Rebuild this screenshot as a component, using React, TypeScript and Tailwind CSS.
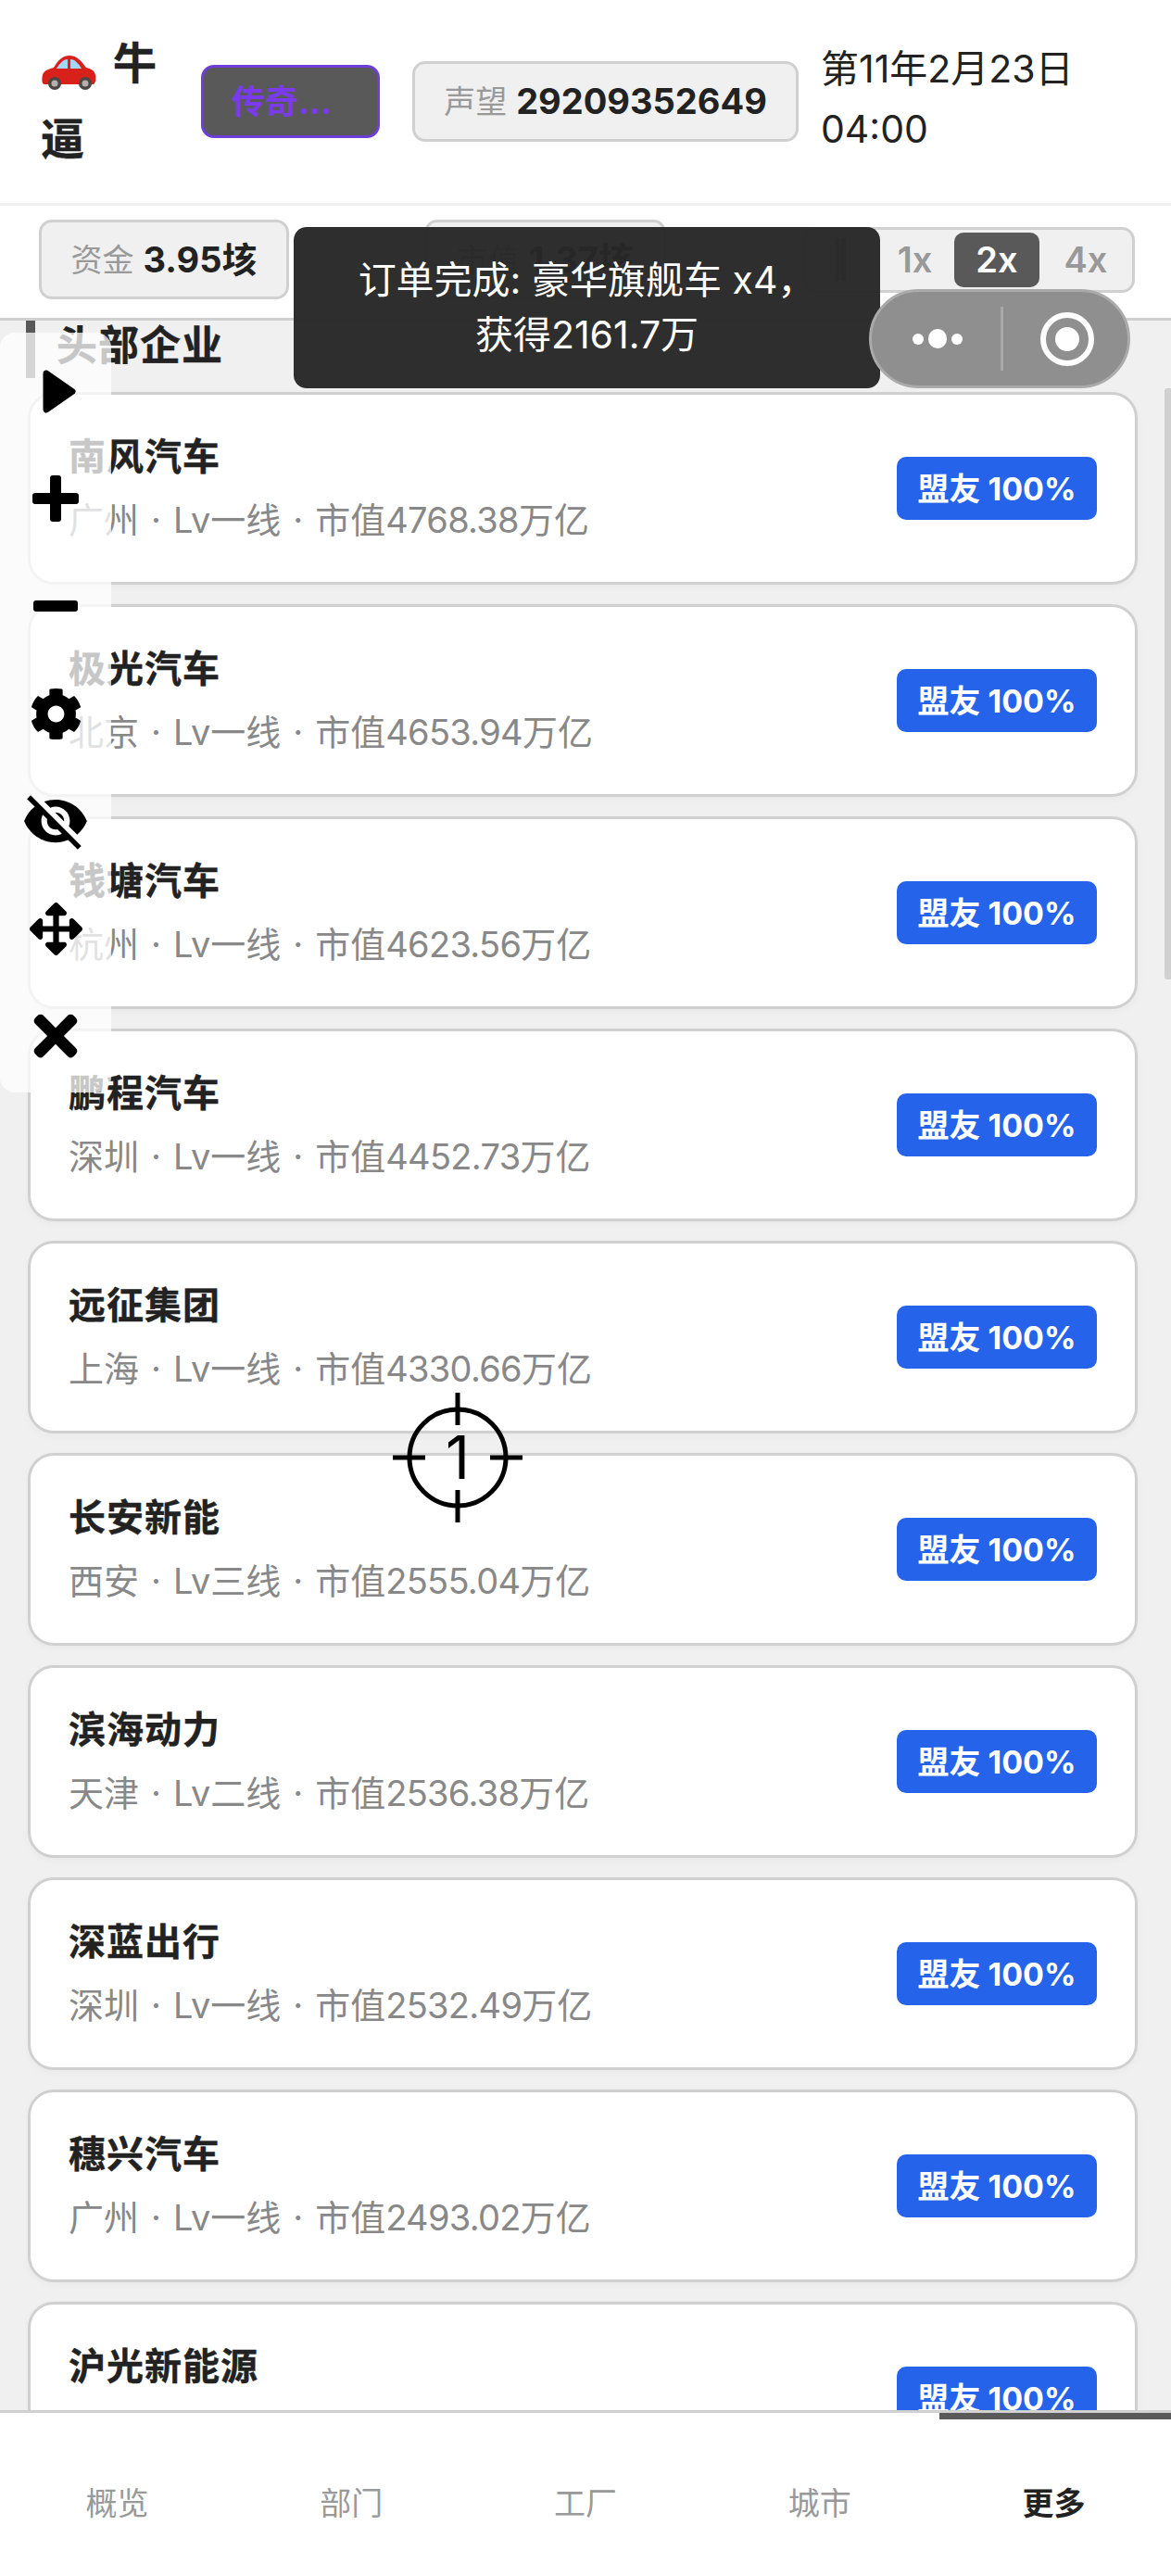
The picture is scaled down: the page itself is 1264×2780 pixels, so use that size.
import React from 'react';
import { FaCog, FaArrowsAlt, FaTimes } from 'react-icons/fa';
import { MdVisibilityOff } from 'react-icons/md';

const companies = [
  { name: '南风汽车', city: '广州', level: '一线', value: '4768.38' },
  { name: '极光汽车', city: '北京', level: '一线', value: '4653.94' },
  { name: '钱塘汽车', city: '杭州', level: '一线', value: '4623.56' },
  { name: '鹏程汽车', city: '深圳', level: '一线', value: '4452.73' },
  { name: '远征集团', city: '上海', level: '一线', value: '4330.66' },
  { name: '长安新能', city: '西安', level: '三线', value: '2555.04' },
  { name: '滨海动力', city: '天津', level: '二线', value: '2536.38' },
  { name: '深蓝出行', city: '深圳', level: '一线', value: '2532.49' },
  { name: '穗兴汽车', city: '广州', level: '一线', value: '2493.02' },
  { name: '沪光新能源', city: '上海', level: '一线', value: '2410.17' },
];

const tabs = ['概览', '部门', '工厂', '城市', '更多'];

const CarIcon = () => (
  <svg width="60" height="38" viewBox="0 0 60 38" className="inline-block align-[-12px]">
    <path d="M2 22c1-5 8-7 12-8 4-7 9-13 17-13s13 6 18 13c5 1 9 3 10 8 1 4 0 9-2 10H4C1 32 1 26 2 22z" fill="#d9211c" />
    <path d="M17 15c3-5 7-10 12-10v10H17zM32 5c5 0 9 5 12 10H32V5z" fill="#a5d8f3" />
    <circle cx="15" cy="31" r="7" fill="#4b4544" />
    <circle cx="15" cy="31" r="3.5" fill="#b5b0ae" />
    <circle cx="48" cy="31" r="7" fill="#4b4544" />
    <circle cx="48" cy="31" r="3.5" fill="#b5b0ae" />
  </svg>
);

const PlayIcon = () => (
  <svg width="36" height="47" viewBox="0 0 36 47" className="ml-[8px]">
    <path d="M4 4L32 23.5L4 43Z" fill="#000000" stroke="#000000" strokeWidth="7" strokeLinejoin="round" />
  </svg>
);

const PlusIcon = () => (
  <svg width="50" height="50" viewBox="0 0 50 50">
    <rect x="0" y="19" width="50" height="12" rx="3" fill="#000000" />
    <rect x="19" y="0" width="12" height="50" rx="3" fill="#000000" />
  </svg>
);

const MinusIcon = () => (
  <svg width="48" height="12" viewBox="0 0 48 12">
    <rect x="0" y="0" width="48" height="12" rx="3" fill="#000000" />
  </svg>
);

const tools = [
  <PlayIcon />,
  <PlusIcon />,
  <MinusIcon />,
  <FaCog size={57} />,
  <MdVisibilityOff size={74} />,
  <FaArrowsAlt size={57} />,
  <FaTimes size={68} />,
];

const Stat = ({ label, value, className }: { label: string; value: string; className: string }) => (
  <div className={`flex items-center justify-center rounded-[14px] border-[3px] border-[#d0d0d0] bg-[#f0f0f0] whitespace-nowrap ${className}`}>
    <span className="text-[34px] text-[#999999]">{label}</span>
    <span className="ml-[10px] text-[38px] font-bold text-[#222222]">{value}</span>
  </div>
);

const CompanyCard = ({ name, city, level, value }: { name: string; city: string; level: string; value: string }) => (
  <div className="flex h-[208px] shrink-0 items-center justify-between rounded-[28px] border-[3px] border-[#d0d0d0] bg-white pl-[41px] pr-[41px] shadow-[0_3px_8px_rgba(0,0,0,0.03)]">
    <div className="flex flex-col gap-[20px]">
      <div className="text-[40px] leading-[48px] font-bold tracking-[1px] text-[#222222] [-webkit-text-stroke:0.4px_#222222]">{name}</div>
      <div className="text-[38px] leading-[48px] text-[#888888]">
        {city}
        <span className="mx-[13px]">·</span>
        Lv{level}
        <span className="mx-[13px]">·</span>
        市值<span className="tracking-[-0.7px]">{value}</span>万亿
      </div>
    </div>
    <div className="flex h-[68px] w-[216px] items-center justify-center rounded-[10px] bg-[#2563eb] text-[34px] font-bold text-white">
      盟友 100%
    </div>
  </div>
);

export default function App() {
  return (
    <div className="relative flex h-[2780px] w-[1264px] flex-col overflow-hidden bg-white [font-family:Inter,'Noto_Sans_CJK_SC',sans-serif]">
      {/* Header */}
      <header className="flex h-[222px] shrink-0 items-center border-b-[3px] border-[#f0f0f0] pl-[44px]">
        <div className="mb-[2px] w-[173px] text-[47px] leading-[82px] font-bold text-[#222222] [-webkit-text-stroke:0.4px_#222222]">
          <div>
            <CarIcon />
            <span className="ml-[18px]">牛</span>
          </div>
          <div>逼</div>
        </div>
        <div className="flex h-[79px] w-[193px] items-center rounded-[14px] border-[3px] border-[#6d3fd6] bg-[#595959] pl-[30px] text-[36px] font-bold text-[#7c3aed]">
          传奇...
        </div>
        <Stat label="声望" value="29209352649" className="ml-[35px] h-[87px] w-[417px]" />
        <div className="mb-[5px] ml-[24px] w-[290px] text-[41px] leading-[65px] text-[#222222]">
          <div>第11年2月23日</div>
          <div>04:00</div>
        </div>
      </header>

      {/* Stats row */}
      <div className="flex h-[124px] shrink-0 items-center border-b-[3px] border-[#d0d0d0] pb-[5px] pl-[42px]">
        <Stat label="资金" value="3.95垓" className="h-[86px] w-[270px]" />
        <Stat label="市值" value="1.37垓" className="ml-[146px] h-[86px] w-[261px]" />
        <div className="ml-[147px] flex h-[71px] w-[359px] items-center rounded-[14px] border-[3px] border-[#d0d0d0] bg-[#f0f0f0] pl-[28px] text-[38px] font-semibold text-[#999999]">
          <span className="w-[48px] text-[#999999]">‖</span>
          <span className="flex w-[85px] justify-center">1x</span>
          <span className="flex h-[59px] w-[92px] items-center justify-center rounded-[10px] bg-[#595959] text-white">2x</span>
          <span className="flex w-[100px] justify-center">4x</span>
        </div>
      </div>

      {/* List */}
      <main className="relative flex min-h-0 flex-1 flex-col overflow-hidden bg-[#f0f0f0]">
        <div className="flex h-[77px] shrink-0 items-start pl-[28px]">
          <div className="h-[62px] w-[10px] bg-[#595959]" />
          <h2 className="ml-[23px] text-[44px] leading-[54px] font-bold tracking-[1px] text-[#222222] [-webkit-text-stroke:0.4px_#222222]">头部企业</h2>
        </div>
        <div className="flex flex-col gap-[21px] pl-[30px] pr-[36px]">
          {companies.map((c) => (
            <CompanyCard key={c.name} {...c} />
          ))}
        </div>
        <div className="absolute right-0 top-[73px] h-[638px] w-[7px] rounded-l-[3px] bg-[#d0d0d0]" />
      </main>

      {/* Tab bar */}
      <nav className="relative grid h-[179px] shrink-0 grid-cols-5 border-t-[3px] border-[#d0d0d0] bg-white pt-[18px]">
        {tabs.map((t, i) => (
          <div key={t} className={`flex items-center justify-center text-[34px] ${i === 4 ? 'font-bold text-[#222222]' : 'text-[#999999]'}`}>
            {t}
          </div>
        ))}
        <div className="absolute right-0 top-0 h-[7px] w-[250px] bg-[#595959]" />
      </nav>

      {/* Toast */}
      <div className="absolute left-[317px] top-[245px] flex h-[174px] w-[633px] flex-col items-center justify-center rounded-[14px] bg-[#272727]/[0.97] text-center text-[41px] leading-[59px] text-white">
        <div>订单完成: 豪华旗舰车 x4，</div>
        <div>获得2161.7万</div>
      </div>

      {/* Capsule */}
      <div className="absolute left-[938px] top-[312px] flex h-[107px] w-[282px] items-center rounded-full border-[3px] border-[#aaaaaa] bg-[#8f8f8f]">
        <div className="flex w-[139px] items-center justify-center gap-[5px] pl-[2px]">
          <span className="h-[12px] w-[12px] rounded-full bg-white" />
          <span className="h-[21px] w-[20px] rounded-full bg-white" />
          <span className="h-[12px] w-[12px] rounded-full bg-white" />
        </div>
        <div className="h-[69px] w-[3px] bg-[#aaaaaa]" />
        <div className="ml-[40px] flex h-[58px] w-[58px] items-center justify-center rounded-full border-[6px] border-white">
          <span className="h-[26px] w-[26px] rounded-full bg-white" />
        </div>
      </div>

      {/* Floating tool panel */}
      <div className="absolute left-0 top-[359px] flex h-[820px] w-[120px] flex-col items-center rounded-[16px] bg-white/75 pt-[5px] text-black">
        {tools.map((tool, i) => (
          <div key={i} className="flex h-[116px] w-[120px] shrink-0 items-center justify-center">
            {tool}
          </div>
        ))}
      </div>

      {/* Crosshair */}
      <div className="absolute left-[424px] top-[1503px] flex h-[140px] w-[140px] items-center justify-center">
        <svg width="140" height="140" viewBox="0 0 140 140" className="absolute inset-0" fill="none" stroke="#000000" strokeWidth="5">
          <circle cx="70" cy="70" r="52" />
          <path d="M70 0v35M70 105v35M0 70h35M105 70h35" />
        </svg>
        <span className="relative text-[64px] leading-none text-black">1</span>
      </div>
    </div>
  );
}
